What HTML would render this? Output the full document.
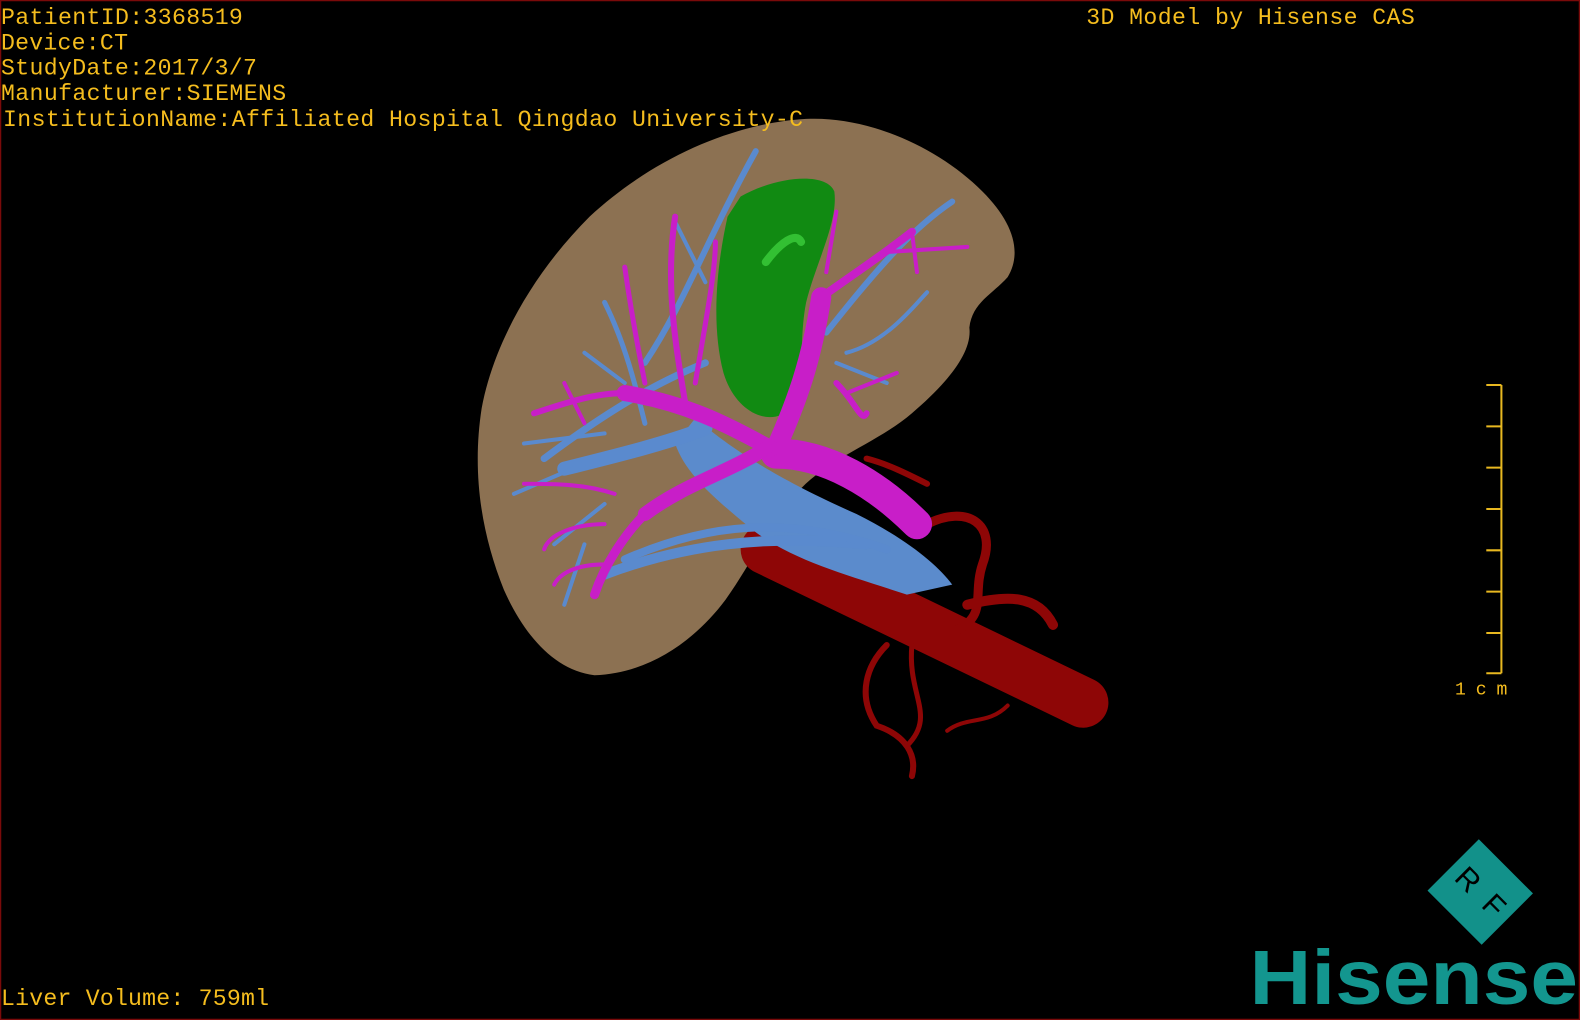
<!DOCTYPE html>
<html><head><meta charset="utf-8"><style>
html,body{margin:0;padding:0;background:#000;}
svg{display:block}
text{font-family:"Liberation Mono","Noto Sans CJK SC",monospace;fill:#f5bd1e;font-size:23px}
</style></head><body>
<svg width="1580" height="1020" viewBox="0 0 1568 1012" preserveAspectRatio="none" xmlns="http://www.w3.org/2000/svg">
<rect x="0.5" y="0.5" width="1567" height="1011" fill="#000" stroke="#7a0a0a" stroke-width="1.5"/>
<!-- liver -->
<path d="M800,118 C860,115 930,145 975,190 C1005,220 1015,250 1000,275 C985,292 965,300 962,325 C965,350 940,380 905,410 C870,440 820,455 790,490 C760,525 745,560 720,595 C690,635 645,668 590,670 C550,665 520,630 500,585 C478,530 468,470 478,405 C490,340 530,270 585,215 C650,155 730,122 800,118 Z" fill="#8c7152"/>
<!-- aorta -->
<g stroke="#8e0606" fill="none" stroke-linecap="round">
<path d="M760,545 L1075,697" stroke-width="50"/>
<path d="M920,520 C960,500 990,520 975,560 C965,590 980,610 950,625" stroke-width="9"/>
<path d="M960,600 C1000,590 1030,590 1045,620" stroke-width="10"/>
<path d="M880,640 C860,660 850,690 870,720 C900,730 910,750 905,770" stroke-width="6"/>
<path d="M905,640 C900,690 930,710 900,740" stroke-width="5"/>
<path d="M860,455 C880,460 900,470 920,480" stroke-width="6"/>
<path d="M1000,700 C980,720 960,710 940,725" stroke-width="4"/>
</g>
<!-- IVC blue -->
<path d="M690,415 C720,440 760,470 850,510 C900,535 930,560 945,580 L900,590 C840,570 780,555 740,520 C710,495 680,470 670,440 Z" fill="#5b8bcc"/>
<g stroke="#5a8ace" fill="none" stroke-linecap="round">
<path d="M560,465 C620,450 660,440 700,425" stroke-width="14"/>
<path d="M600,570 C680,540 760,530 860,540" stroke-width="10"/>
<path d="M620,555 C700,520 780,510 880,545" stroke-width="8"/>
<path d="M540,455 C600,410 650,380 700,360" stroke-width="7"/>
<path d="M640,360 C680,300 700,240 750,150" stroke-width="6"/>
<path d="M820,330 C860,280 900,230 945,200" stroke-width="6"/>
<path d="M840,350 C880,340 910,300 920,290" stroke-width="4"/>
<path d="M600,300 C620,340 630,380 640,420" stroke-width="5"/>
<path d="M520,440 L600,430 M510,490 L580,460 M550,540 L600,500 M560,600 L580,540 M580,350 L620,380 M670,220 L700,280 M830,360 L880,380" stroke-width="4"/>
</g>
<!-- gallbladder -->
<path d="M735,195 C770,175 820,170 828,190 C832,220 810,260 800,300 C792,340 800,385 785,405 C765,425 730,410 718,370 C705,320 712,260 722,215 Z" fill="#118a12"/>
<path d="M760,260 C775,240 790,230 795,240" stroke="#33c033" stroke-width="8" fill="none" stroke-linecap="round"/>
<!-- portal magenta -->
<g stroke="#c81ec8" fill="none" stroke-linecap="round">
<path d="M770,450 C820,450 870,480 910,520" stroke-width="30"/>
<path d="M770,445 C790,400 805,360 815,295" stroke-width="20"/>
<path d="M765,445 C720,420 680,400 620,390" stroke-width="16"/>
<path d="M760,445 C720,470 680,480 640,510" stroke-width="14"/>
<path d="M640,510 C620,530 600,560 590,590" stroke-width="9"/>
<path d="M620,390 C590,390 560,400 530,410" stroke-width="6"/>
<path d="M815,295 C850,270 880,250 905,230" stroke-width="8"/>
<path d="M830,380 C850,400 855,420 860,410" stroke-width="6"/>
<path d="M680,400 C670,340 660,280 670,215" stroke-width="6"/>
<path d="M690,380 C700,320 710,270 710,240" stroke-width="5"/>
<path d="M640,380 C630,330 625,300 620,265" stroke-width="5"/>
<path d="M610,490 C580,480 550,480 520,480 M600,520 C570,520 545,530 540,545 M600,560 C570,560 555,570 550,580 M880,250 L960,245 M905,230 L910,270 M840,390 L890,370 M820,270 L830,210 M580,420 L560,380" stroke-width="4"/>
</g>
<!-- scale bar -->
<g stroke="#e8b820" stroke-width="2" fill="none">
<path d="M1490,382 L1490,668 M1475,382 L1490,382 M1475,423 L1490,423 M1475,464 L1490,464 M1475,505 L1490,505 M1475,546 L1490,546 M1475,587 L1490,587 M1475,628 L1490,628 M1475,668 L1490,668"/>
</g>
<text x="1444" y="689" textLength="52" style="font-size:18px">1cm</text>
<!-- text -->
<text x="1" y="24" textLength="240">PatientID:3368519</text>
<text x="1" y="49" textLength="126">Device:CT</text>
<text x="1" y="74" textLength="254">StudyDate:2017/3/7</text>
<text x="1" y="99" textLength="283">Manufacturer:SIEMENS</text>
<text x="3" y="125" textLength="794">InstitutionName:Affiliated Hospital Qingdao University-C</text>
<text x="1078" y="24" textLength="326">3D Model by Hisense CAS</text>
<text x="1" y="997" textLength="266">Liver Volume: 759ml</text>
<!-- logo -->
<g transform="translate(1469,885) rotate(45)">
<rect x="-38" y="-36" width="76" height="72" fill="#12918a"/>
<text x="-28" y="10" style="fill:#000;font-size:30px;font-family:'Liberation Sans',sans-serif">R</text>
<text x="10" y="10" style="fill:#000;font-size:30px;font-family:'Liberation Sans',sans-serif">F</text>
</g>
<text x="1240" y="996" textLength="326" lengthAdjust="spacingAndGlyphs" style="fill:#13968f;font-family:'Liberation Sans',sans-serif;font-weight:bold;font-size:76px">Hisense</text>
</svg>
</body></html>
